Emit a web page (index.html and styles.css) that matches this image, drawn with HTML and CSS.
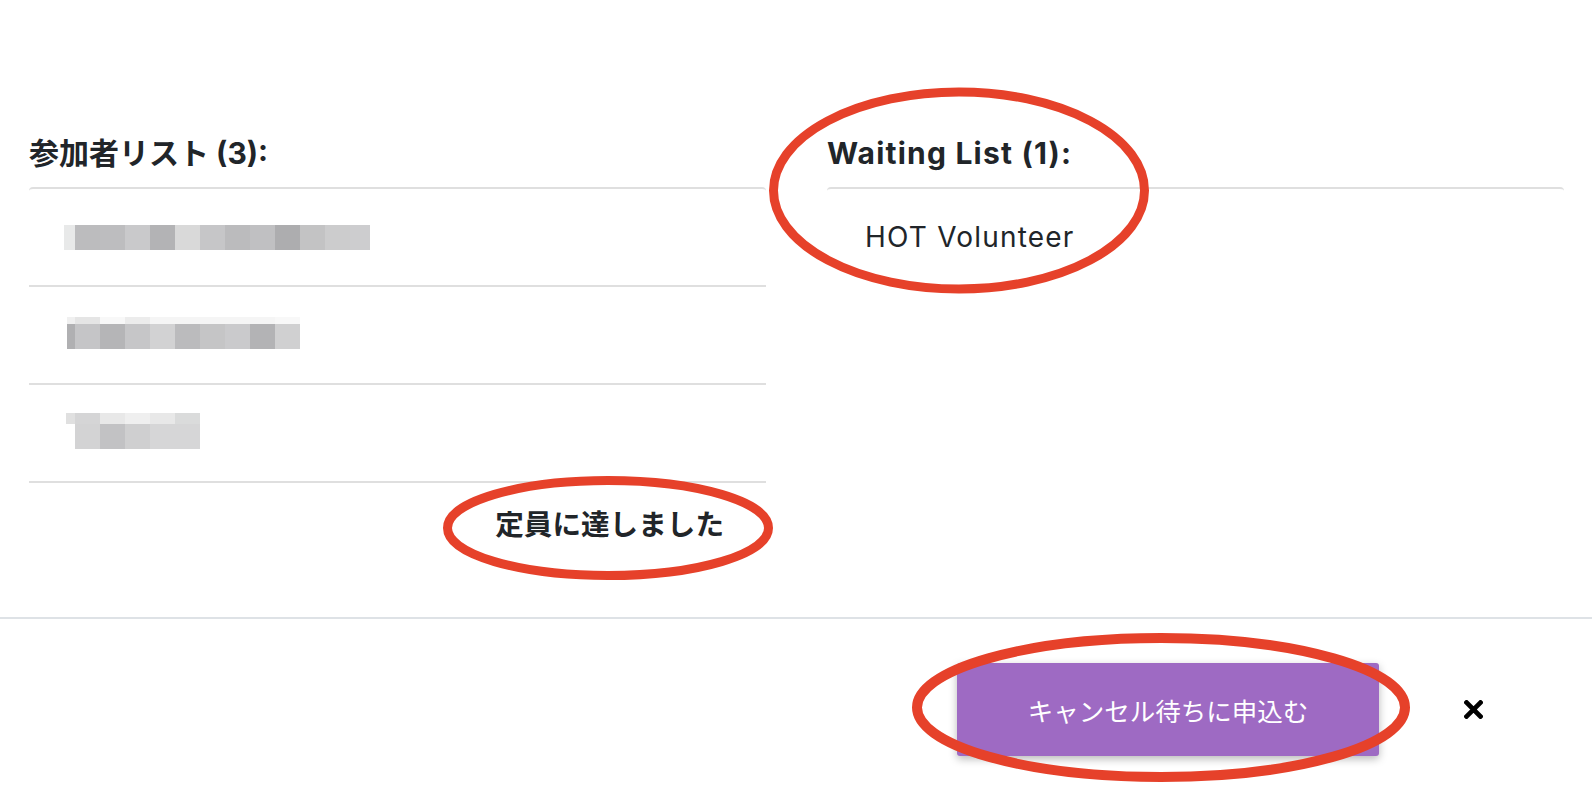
FILE: index.html
```html
<!DOCTYPE html>
<html lang="ja">
<head>
<meta charset="utf-8">
<title>参加者リスト</title>
<link rel="stylesheet" href="styles.css">
</head>
<body>
<div class="page">
  <main class="main">
    <div class="cols">
      <section class="col">
        <h5 class="list-title">参加者リスト (3):</h5>
        <ul class="list">
          <li class="item"><span class="blur blur-1"></span></li>
          <li class="item"><span class="blur blur-2"></span></li>
          <li class="item"><span class="blur blur-3"></span></li>
        </ul>
        <p class="status">定員に達しました</p>
      </section>
      <section class="col">
        <h5 class="list-title title-latin">Waiting List (1):</h5>
        <ul class="list list-wait">
          <li class="item item-wait">HOT Volunteer</li>
        </ul>
      </section>
    </div>
  </main>
  <footer class="footer">
    <button class="btn-wait" type="button">キャンセル待ちに申込む</button>
    <button class="btn-close" type="button" aria-label="close">
      <svg width="19" height="19" viewBox="0 0 19 19"><path d="M2.5 2.5 L16.5 16.5 M16.5 2.5 L2.5 16.5" stroke="#000" stroke-width="4.6" stroke-linecap="square" fill="none"/></svg>
    </button>
  </footer>
  <svg class="marks" width="1592" height="790" viewBox="0 0 1592 790">
    <ellipse cx="959" cy="190.5" rx="185.5" ry="98.5" fill="none" stroke="#e6412a" stroke-width="9"/>
    <ellipse cx="608" cy="528" rx="160.5" ry="47.5" fill="none" stroke="#e6412a" stroke-width="9"/>
    <ellipse cx="1161" cy="707.5" rx="244" ry="69.5" fill="none" stroke="#e6412a" stroke-width="10"/>
  </svg>
</div>
</body>
</html>
```

FILE: styles.css
```css
* { box-sizing: border-box; }
html, body { margin: 0; padding: 0; background: #fff; }
body {
  font-family: Inter, "Noto Sans CJK JP", sans-serif;
  color: #212529;
  width: 1592px;
  height: 790px;
  overflow: hidden;
}
.page { position: relative; width: 1592px; height: 790px; }
.main { padding: 135px 28px 0 29px; }
.cols {
  display: grid;
  grid-template-columns: 737px 737px;
  column-gap: 61px;
}
.list-title {
  margin: 0 0 16px;
  font-size: 30px;
  line-height: 36px;
  font-weight: 700;
  white-space: nowrap;
}
.title-latin { letter-spacing: 1.2px; }
.list {
  list-style: none;
  margin: 0;
  padding: 0;
  border-top: 2px solid #dfdfdf;
  border-radius: 4px 4px 0 0;
}
.item {
  height: 98px;
  border-bottom: 2px solid #dfdfdf;
  display: flex;
  align-items: center;
  padding-left: 35px;
  font-size: 28px;
}
.item-wait {
  border-bottom: 0;
  padding-left: 38px;
  height: 96px;
  letter-spacing: 1.2px;
}
.blur { display: block; }
.blur-1 {
  width: 306px; height: 25px;
  background: linear-gradient(to right,
    #e8e9e9 0 11px, #bcbcbe 11px 36px, #bdbdbf 36px 61px, #c9c9cb 61px 86px,
    #b3b3b5 86px 111px, #d9d9d9 111px 136px, #c6c6c8 136px 161px, #bbbbbd 161px 186px,
    #c0c0c2 186px 211px, #adadaf 211px 236px, #c3c3c4 236px 261px, #cccccd 261px 286px,
    #cdcdcf 286px 306px);
}
.blur-2 {
  width: 233px; height: 32px; margin-left: 3px; margin-top: -4px;
  background:
    linear-gradient(to right,
      #f0f0f0 0 8px, #e5e5e5 8px 33px, #f8f8f8 33px 58px, #ececec 58px 83px,
      #f5f5f5 83px 208px, #f8f8f8 208px 233px) top / 100% 7px no-repeat,
    linear-gradient(to right,
      #b0b0b2 0 8px, #c5c5c7 8px 33px, #b5b5b7 33px 58px, #c6c6c8 58px 83px,
      #d2d2d3 83px 108px, #bbbbbd 108px 133px, #c5c5c6 133px 158px, #cacacc 158px 183px,
      #b3b3b5 183px 208px, #d0d0d1 208px 233px) bottom / 100% 25px no-repeat;
}
.blur-3 {
  width: 134px; height: 36px; margin-left: 2px; margin-top: -4px;
  background:
    linear-gradient(to right,
      #e0e0e0 0 9px, #d5d5d6 9px 34px, #e8e8e8 34px 59px, #efefef 59px 84px,
      #e8e8e8 84px 109px, #dadbdb 109px 134px) top / 100% 11px no-repeat,
    linear-gradient(to right,
      #ffffff 0 9px, #d3d3d4 9px 34px, #c2c2c4 34px 59px, #cfcfd0 59px 84px,
      #d6d6d7 84px 134px) bottom / 100% 25px no-repeat;
}
.status {
  margin: 21px 0 0;
  padding-right: 42px;
  text-align: right;
  font-size: 28.6px;
  line-height: 42px;
  font-weight: 700;
}
.footer {
  position: absolute;
  left: 0; right: 0; top: 617px;
  border-top: 2px solid #dee2e6;
  display: flex;
  justify-content: flex-end;
  align-items: center;
  padding: 44px 109px 0 0;
}
.btn-wait {
  width: 422px;
  height: 93px;
  border: 0;
  border-radius: 3px;
  background: #9e6ac3;
  color: #fff;
  font-family: Inter, "Noto Sans CJK JP", sans-serif;
  font-size: 25.5px;
  font-weight: 400;
  box-shadow: 0 3px 8px rgba(0,0,0,0.28);
  padding: 0;
}
.btn-close {
  margin-left: 85px;
  width: 19px;
  height: 19px;
  padding: 0;
  border: 0;
  background: transparent;
  display: block;
  line-height: 0;
}
.marks {
  position: absolute;
  left: 0; top: 0;
  pointer-events: none;
}
```
